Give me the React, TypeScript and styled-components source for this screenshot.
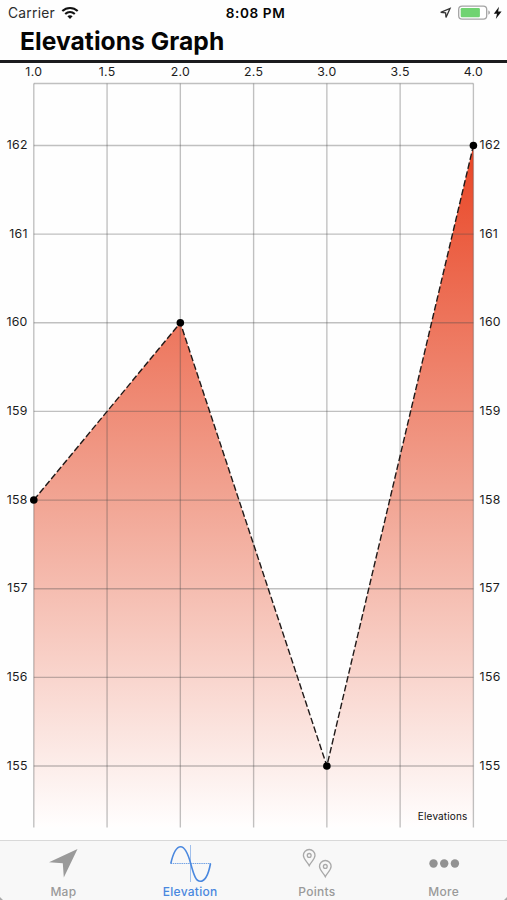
import React from "react";
import styled, { createGlobalStyle } from "styled-components";

const GlobalStyle = createGlobalStyle`
  * { box-sizing: border-box; }
  body {
    margin: 0;
    background: #fff;
    font-family: Inter, "Liberation Sans", sans-serif;
    overflow: hidden;
  }
`;

const Screen = styled.div`
  display: flex;
  flex-direction: column;
  width: 507px;
  height: 900px;
  background: #fefefe;
  color: #050505;
`;

const StatusBar = styled.header`
  display: grid;
  grid-template-columns: 1fr auto 1fr;
  align-items: center;
  height: 26px;
  padding: 0 4px 0 8px;
`;

const Carrier = styled.div`
  display: flex;
  align-items: center;
  gap: 6px;
  font-size: 13.8px;
  letter-spacing: 0.25px;
  color: #2c2c2c;
`;

const Clock = styled.time`
  font-size: 13.6px;
  font-weight: 600;
  letter-spacing: 0.6px;
`;

const Indicators = styled.div`
  display: flex;
  align-items: center;
  justify-content: flex-end;
`;

const TitleBar = styled.div`
  height: 37px;
  padding-left: 20px;
  border-bottom: 3px solid #1c1c1e;
`;

const Title = styled.h1`
  margin: 0;
  font-size: 24.6px;
  line-height: 30px;
  font-weight: 700;
  letter-spacing: 0.05px;
  white-space: nowrap;
`;

const ChartArea = styled.main`
  height: 777px;
`;

const ChartSvg = styled.svg`
  display: block;
`;

const AxisLabel = styled.text`
  font-size: 12.3px;
  letter-spacing: 0.3px;
  fill: #1c1c1c;
`;

const SeriesLabel = styled.text`
  font-size: 10px;
  letter-spacing: 0.15px;
  fill: #111;
`;

const TabBar = styled.nav`
  display: grid;
  grid-template-columns: repeat(4, 1fr);
  flex: 1;
  border-top: 1px solid #d9d9d9;
  background:
    linear-gradient(45deg, #aaa 1.8px, transparent 2.4px),
    linear-gradient(-45deg, #aaa 1.8px, transparent 2.4px),
    #f8f8f8;
`;

const Tab = styled.a<{ $active?: boolean }>`
  display: flex;
  flex-direction: column;
  align-items: center;
  color: ${(p) => (p.$active ? "#4a88df" : "#9a9a9a")};
  font-size: 12px;
  line-height: 15px;
  font-weight: 500;
  letter-spacing: 0.25px;
`;

const TabIcon = styled.svg`
  display: block;
  width: 48px;
  height: 43px;
`;

const X_TICKS = [1, 1.5, 2, 2.5, 3, 3.5, 4];
const Y_TICKS = [162, 161, 160, 159, 158, 157, 156, 155];
const POINTS = [
  [1, 158],
  [2, 160],
  [3, 155],
  [4, 162],
];
const TOP = 20.5;
const BOTTOM = 764.5;
const LEFT = 33.8;
const RIGHT = 473.4;

const px = (v: number) => LEFT + ((v - 1) * (RIGHT - LEFT)) / 3;
const py = (v: number) => 82.5 + (162 - v) * 88.64;

function ElevationChart() {
  const line = POINTS.map(([x, y]) => `${px(x)},${py(y)}`).join(" ");
  return (
    <ChartSvg width="507" height="777" viewBox="0 0 507 777">
      <defs>
        <linearGradient id="elevationFill" gradientUnits="userSpaceOnUse" x1="0" y1={py(162)} x2="0" y2={BOTTOM}>
          <stop offset="0" stopColor="#e94525" />
          <stop offset="0.5" stopColor="#f1a18f" />
          <stop offset="1" stopColor="#fffefe" />
        </linearGradient>
      </defs>
      <polygon points={`${LEFT},${BOTTOM} ${line} ${RIGHT},${BOTTOM}`} fill="url(#elevationFill)" />
      <g stroke="#4a4a4a" strokeOpacity="0.34" strokeWidth="1.35">
        <line x1={LEFT} x2={RIGHT} y1={TOP} y2={TOP} />
        {X_TICKS.map((x) => (
          <line key={x} x1={px(x)} x2={px(x)} y1={TOP} y2={BOTTOM} />
        ))}
        {Y_TICKS.map((y) => (
          <line key={y} x1={LEFT} x2={RIGHT} y1={py(y)} y2={py(y)} />
        ))}
      </g>
      <polyline points={line} fill="none" stroke="#201a19" strokeWidth="1.4" strokeDasharray="6.5 2.6" />
      {POINTS.map(([x, y]) => (
        <circle key={x} cx={px(x)} cy={py(y)} r="3.8" fill="#000" />
      ))}
      {X_TICKS.map((x) => (
        <AxisLabel key={x} x={px(x)} y="13.2" textAnchor="middle">
          {x.toFixed(1)}
        </AxisLabel>
      ))}
      {Y_TICKS.map((y) => (
        <React.Fragment key={y}>
          <AxisLabel x="27.7" y={py(y) + 3.6} textAnchor="end">
            {y}
          </AxisLabel>
          <AxisLabel x="479.6" y={py(y) + 3.6}>
            {y}
          </AxisLabel>
        </React.Fragment>
      ))}
      <SeriesLabel x="467.5" y="757" textAnchor="end">
        Elevations
      </SeriesLabel>
    </ChartSvg>
  );
}

function WifiIcon() {
  return (
    <svg width="18" height="14" viewBox="0 0 18 14" fill="none" stroke="#111" strokeWidth="2.1">
      <path d="M1.3 5.1C5.7 1 12.3 1 16.7 5.1" />
      <path d="M4.2 8.1C7 5.5 11 5.5 13.8 8.1" />
      <path d="M9 12.9 6.4 10.3C7.9 9 10.1 9 11.6 10.3Z" fill="#111" stroke="none" />
    </svg>
  );
}

function StatusIndicators() {
  return (
    <svg width="64" height="20" viewBox="439 3 64 20">
      <path d="M440.7 12.4 450 8.4 446 17.4 445.6 12.8Z" fill="none" stroke="#333" strokeWidth="1.3" />
      <rect x="458.7" y="6.1" width="28" height="13" rx="3.4" fill="#fff" stroke="#a4a4a4" strokeWidth="1.3" />
      <rect x="460.7" y="8" width="19.2" height="9.2" rx="1.2" fill="#70d371" />
      <path d="M488.3 10.5C490.5 11.2 490.5 14 488.3 14.7Z" fill="#a4a4a4" />
      <path d="M499 6.8 493.8 13.7H497L495.8 18.9 501.6 11.6H498.1Z" fill="#111" />
    </svg>
  );
}

export default function App() {
  return (
    <>
      <GlobalStyle />
      <Screen>
        <StatusBar>
          <Carrier>
            Carrier
            <WifiIcon />
          </Carrier>
          <Clock>8:08 PM</Clock>
          <Indicators>
            <StatusIndicators />
          </Indicators>
        </StatusBar>
        <TitleBar>
          <Title>Elevations Graph</Title>
        </TitleBar>
        <ChartArea>
          <ElevationChart />
        </ChartArea>
        <TabBar>
          <Tab>
            <TabIcon viewBox="39.5 841 48 43">
              <path d="M78 849 64.3 877.5 63.3 863.3 49.5 862.2Z" fill="currentColor" />
            </TabIcon>
            Map
          </Tab>
          <Tab $active>
            <TabIcon viewBox="166 841 48 43" fill="none" stroke="currentColor">
              <path d="M190.5 845V882" strokeWidth="1" opacity="0.5" />
              <path d="M170.5 863.5H211" strokeWidth="1.2" strokeDasharray="1.5 0.7" opacity="0.75" />
              <path
                d="M170.8 863.5C173.8 850.5 177.2 846.8 180.7 846.8C184.5 846.8 187.3 851.5 190.7 863.5C194 876 196.2 881.3 200.2 881.3C204 881.3 208 877 210.5 863.5"
                strokeWidth="1.6"
              />
            </TabIcon>
            Elevation
          </Tab>
          <Tab>
            <TabIcon viewBox="293 841 48 43" fill="none" stroke="#a9a9a9" strokeWidth="1.3">
              <path d="M309.2 865.7C307.5 861.8 303.4 859.5 303.4 855.3A5.8 5.8 0 0 1 315 855.3C315 859.5 310.9 861.8 309.2 865.7Z" />
              <circle cx="309.2" cy="855.4" r="1.9" />
              <path d="M325.3 876.7C323.6 872.8 319.5 870.5 319.5 866.3A5.8 5.8 0 0 1 331.1 866.3C331.1 870.5 327 872.8 325.3 876.7Z" />
              <circle cx="325.3" cy="866.4" r="1.9" />
            </TabIcon>
            Points
          </Tab>
          <Tab>
            <TabIcon viewBox="419.5 841 48 43" fill="#929292">
              <circle cx="433" cy="863.5" r="4.2" />
              <circle cx="443.7" cy="863.5" r="4.2" />
              <circle cx="454.4" cy="863.5" r="4.2" />
            </TabIcon>
            More
          </Tab>
        </TabBar>
      </Screen>
    </>
  );
}
